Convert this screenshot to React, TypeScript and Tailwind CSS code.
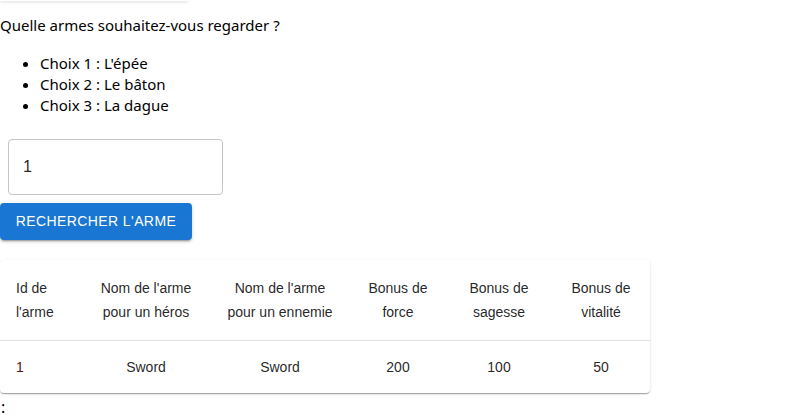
const rows = [{ id: 1, hero: "Sword", enemy: "Sword", force: 200, sagesse: 100, vitalite: 50 }];

const paperShadow =
  "shadow-[0px_2px_1px_-1px_rgba(0,0,0,0.2),0px_1px_1px_0px_rgba(0,0,0,0.14),0px_1px_3px_0px_rgba(0,0,0,0.12)]";

export default function App() {
  return (
    <div className="min-h-screen bg-white text-black font-['Noto_Sans',sans-serif] text-[16px]">
      <div className="w-[188px] h-[1px] bg-white shadow-[0px_1px_3px_0px_rgba(0,0,0,0.25)]" />

      <p className="mt-[14px] leading-[21px] text-[15px]">Quelle armes souhaitez-vous regarder ?</p>
      <ul className="list-disc pl-[40px] mt-[17px] text-[15px]">
        <li className="leading-[21px]">Choix 1 : L'épée</li>
        <li className="leading-[21px]">Choix 2 : Le bâton</li>
        <li className="leading-[21px]">Choix 3 : La dague</li>
      </ul>

      <div className="m-[8px] mt-[23px] w-[215px] h-[56px] border border-[#c4c4c4] rounded-[4px] flex items-center px-[14px] font-['Liberation_Sans',Arial,sans-serif] text-[16px] text-[rgba(0,0,0,0.87)]">
        1
      </div>

      <button className="h-[37px] w-[192px] rounded-[4px] bg-[#1976d2] text-white uppercase text-[14px] tracking-[0.4px] font-['Liberation_Sans',Arial,sans-serif] shadow-[0px_3px_1px_-2px_rgba(0,0,0,0.2),0px_2px_2px_0px_rgba(0,0,0,0.14),0px_1px_5px_0px_rgba(0,0,0,0.12)]">
        Rechercher l'arme
      </button>

      <div className={`mt-[20px] w-[650px] rounded-[4px] bg-white ${paperShadow} font-['Liberation_Sans',Arial,sans-serif] text-[14px] text-[rgba(0,0,0,0.87)]`}>
        <table className="w-full border-collapse table-fixed">
          <colgroup>
            <col className="w-[82px]" />
            <col className="w-[128px]" />
            <col className="w-[140px]" />
            <col className="w-[96px]" />
            <col className="w-[106px]" />
            <col className="w-[98px]" />
          </colgroup>
          <thead>
            <tr className="border-b border-[#e0e0e0]">
              <th className="p-[16px] font-normal text-left leading-[24px] whitespace-nowrap">Id de<br />l'arme</th>
              <th className="py-[16px] font-normal text-center leading-[24px] whitespace-nowrap">Nom de l'arme<br />pour un héros</th>
              <th className="py-[16px] font-normal text-center leading-[24px] whitespace-nowrap">Nom de l'arme<br />pour un ennemie</th>
              <th className="py-[16px] font-normal text-center leading-[24px] whitespace-nowrap">Bonus de<br />force</th>
              <th className="py-[16px] font-normal text-center leading-[24px] whitespace-nowrap">Bonus de<br />sagesse</th>
              <th className="py-[16px] font-normal text-center leading-[24px] whitespace-nowrap">Bonus de<br />vitalité</th>
            </tr>
          </thead>
          <tbody>
            {rows.map((r) => (
              <tr key={r.id}>
                <td className="p-[16px] leading-[20px] text-left text-[#5a1010]">{r.id}</td>
                <td className="py-[16px] leading-[20px] text-center">{r.hero}</td>
                <td className="py-[16px] leading-[20px] text-center">{r.enemy}</td>
                <td className="py-[16px] leading-[20px] text-center">{r.force}</td>
                <td className="py-[16px] leading-[20px] text-center">{r.sagesse}</td>
                <td className="py-[16px] leading-[20px] text-center">{r.vitalite}</td>
              </tr>
            ))}
          </tbody>
        </table>
      </div>

      <div className="mt-[4px] pl-[1px] leading-[21px]">:</div>
    </div>
  );
}
